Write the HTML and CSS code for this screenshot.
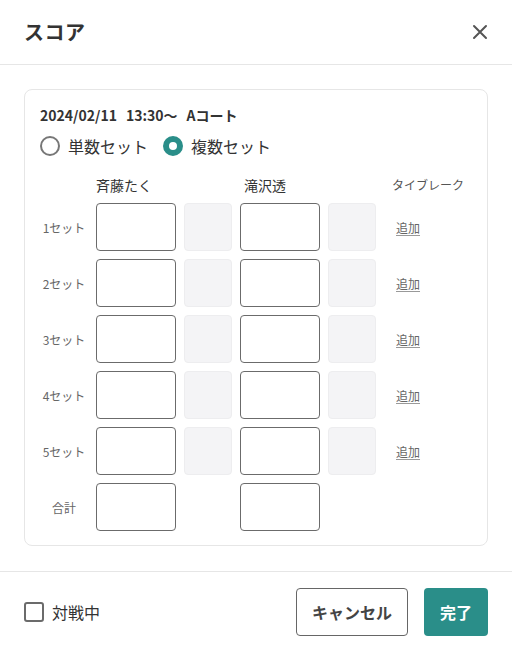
FILE: index.html
```html
<!DOCTYPE html>
<html lang="ja">
<head>
<meta charset="utf-8">
<link rel="stylesheet" href="styles.css">
</head>
<body>
<div class="dialog">
  <header class="dlg-header">
    <h1 class="title">スコア</h1>
    <button class="close" aria-label="閉じる">
      <svg width="16" height="16" viewBox="0 0 16 16"><path d="M2 2 L14 14 M14 2 L2 14" stroke="#555" stroke-width="2" stroke-linecap="round"/></svg>
    </button>
  </header>
  <main class="dlg-body">
    <section class="card">
      <div class="match-info"><span>2024/02/11</span><span>13:30〜</span><span>Aコート</span></div>
      <div class="radios">
        <label class="radio"><span class="r-dot"></span>単数セット</label>
        <label class="radio checked"><span class="r-dot"></span>複数セット</label>
      </div>
      <div class="grid">
        <div></div>
        <div class="player">斉藤たく</div>
        <div></div>
        <div class="player second">滝沢透</div>
        <div></div>
        <div class="tb-head">タイブレーク</div>

        <div class="rlabel">1セット</div><div class="inp"></div><div class="tb"></div><div class="inp"></div><div class="tb"></div><div class="add"><a>追加</a></div>
        <div class="rlabel">2セット</div><div class="inp"></div><div class="tb"></div><div class="inp"></div><div class="tb"></div><div class="add"><a>追加</a></div>
        <div class="rlabel">3セット</div><div class="inp"></div><div class="tb"></div><div class="inp"></div><div class="tb"></div><div class="add"><a>追加</a></div>
        <div class="rlabel">4セット</div><div class="inp"></div><div class="tb"></div><div class="inp"></div><div class="tb"></div><div class="add"><a>追加</a></div>
        <div class="rlabel">5セット</div><div class="inp"></div><div class="tb"></div><div class="inp"></div><div class="tb"></div><div class="add"><a>追加</a></div>
        <div class="rlabel">合計</div><div class="inp"></div><div></div><div class="inp"></div><div></div><div></div>
      </div>
    </section>
  </main>
  <footer class="dlg-footer">
    <label class="check"><span class="box"></span>対戦中</label>
    <div class="actions">
      <button class="btn cancel">キャンセル</button>
      <button class="btn done">完了</button>
    </div>
  </footer>
</div>
</body>
</html>
```
FILE: styles.css
```css
* { box-sizing: border-box; }
html, body { margin: 0; padding: 0; background: #fff; }
body {
  font-family: "Noto Sans CJK JP", "Noto Sans", sans-serif;
  color: #333;
  width: 512px;
  height: 660px;
}
.dlg-header {
  height: 65px;
  border-bottom: 1px solid #e6e6e6;
  display: flex;
  align-items: center;
  justify-content: space-between;
  padding: 0 24px 0 24px;
}
.title {
  margin: 0;
  font-size: 20px;
  font-weight: 700;
  color: #333;
  line-height: 28px;
  letter-spacing: 0.5px;
}
.close {
  border: 0;
  background: none;
  padding: 0;
  width: 16px;
  height: 16px;
  display: flex;
}
.dlg-body {
  padding: 24px 24px 25px;
}
.card {
  border: 1px solid #e6e6e6;
  border-radius: 8px;
  padding: 15px 15px 14px;
}
.match-info {
  display: flex;
  gap: 9px;
  font-size: 14px;
  font-weight: 700;
  line-height: 22px;
  color: #333;
  margin-top: -1px;
}
.radios {
  display: flex;
  gap: 15px;
  margin-top: 8px;
}
.radio {
  display: flex;
  align-items: center;
  gap: 8px;
  font-size: 16px;
  line-height: 24px;
  color: #333;
}
.r-dot {
  width: 20px;
  height: 20px;
  border-radius: 50%;
  border: 2px solid #777;
  display: inline-block;
}
.radio.checked .r-dot {
  border: 6px solid #2a8e89;
  background: #fff;
}
.grid {
  display: grid;
  grid-template-columns: 48px 80px 48px 80px 48px 1fr;
  grid-template-rows: 20px repeat(6, 48px);
  column-gap: 8px;
  row-gap: 8px;
  margin-top: 17px;
}
.player {
  font-size: 14px;
  line-height: 20px;
  color: #333;
}
.player.second {
  padding-left: 4px;
}
.tb-head {
  font-size: 12px;
  line-height: 20px;
  color: #555;
  padding-left: 8px;
}
.rlabel {
  font-size: 12px;
  color: #666;
  display: flex;
  align-items: center;
  justify-content: center;
}
.inp {
  border: 1px solid #6b6b6b;
  border-radius: 4px;
  background: #fff;
}
.tb {
  background: #f4f4f6;
  border: 1px solid #ededef;
  border-radius: 4px;
}
.add {
  display: flex;
  align-items: center;
  padding-left: 12px;
}
.add a {
  font-size: 12px;
  color: #666;
  text-decoration: underline;
  text-decoration-color: #999;
  text-underline-offset: 2px;
}
.dlg-footer {
  border-top: 1px solid #e6e6e6;
  padding: 16px 24px;
  display: flex;
  align-items: center;
  justify-content: space-between;
}
.check {
  display: flex;
  align-items: center;
  gap: 8px;
  font-size: 16px;
  color: #333;
}
.box {
  width: 20px;
  height: 20px;
  border: 2px solid #6b6b6b;
  border-radius: 3px;
  display: inline-block;
}
.actions {
  display: flex;
  gap: 16px;
}
.btn {
  font-family: inherit;
  font-size: 16px;
  font-weight: 700;
  height: 48px;
  border-radius: 4px;
  padding: 0;
}
.cancel {
  width: 112px;
  background: #fff;
  border: 1px solid #666;
  color: #444;
}
.done {
  width: 64px;
  background: #2a8e89;
  border: 0;
  color: #fff;
}
```
